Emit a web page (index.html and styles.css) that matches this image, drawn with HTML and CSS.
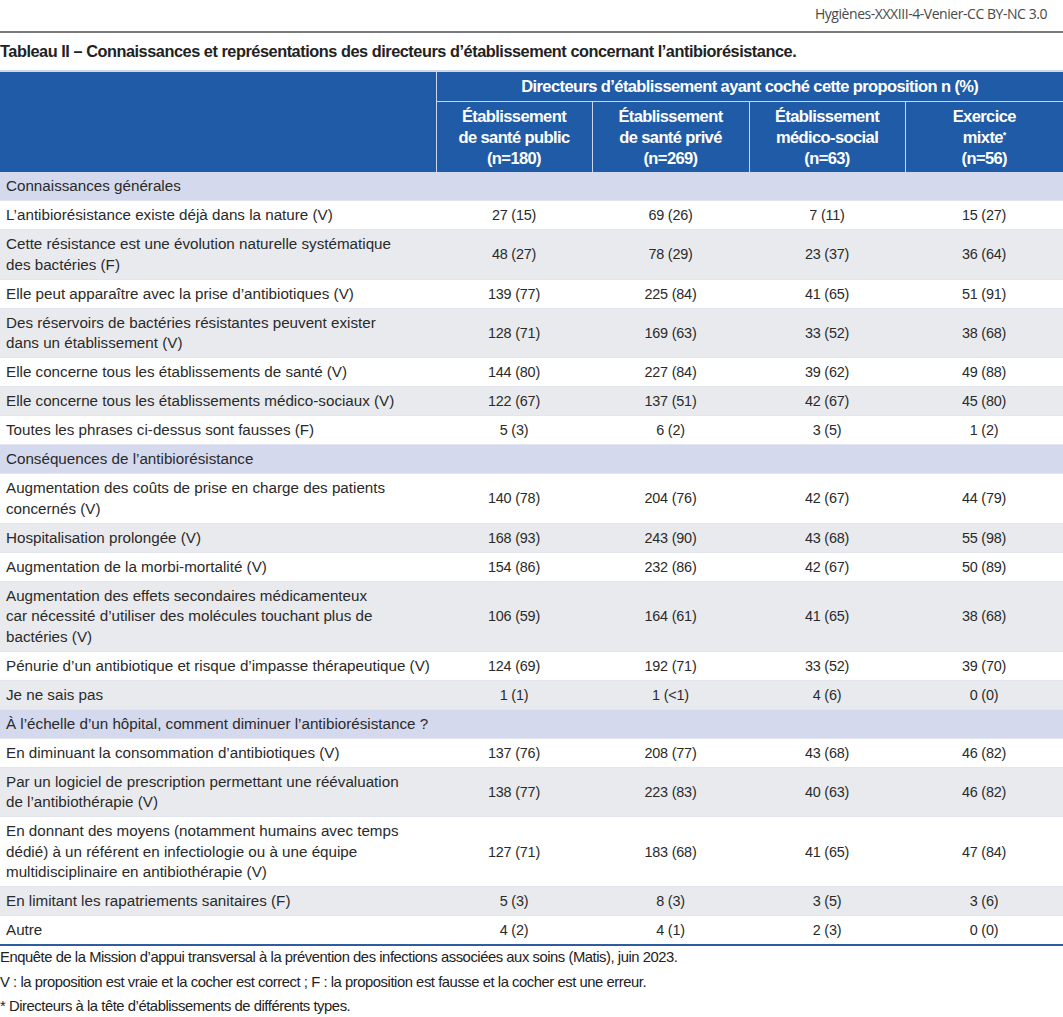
FILE: index.html
```html
<!DOCTYPE html>
<html lang="fr">
<head>
<meta charset="utf-8">
<link rel="stylesheet" href="styles.css">
</head>
<body>
<div class="page">
  <div class="source">Hygiènes-XXXIII-4-Venier-CC BY-NC 3.0</div>
  <h1 class="title">Tableau II – Connaissances et représentations des directeurs d’établissement concernant l’antibiorésistance.</h1>
  <table class="tbl">
    <colgroup>
      <col class="c0"><col class="c1"><col class="c2"><col class="c3"><col class="c4">
    </colgroup>
    <thead>
      <tr class="h1">
        <th rowspan="2" class="blank"></th>
        <th colspan="4">Directeurs d’établissement ayant coché cette proposition n (%)</th>
      </tr>
      <tr class="h2">
        <th>Établissement<br>de santé public<br>(n=180)</th>
        <th>Établissement<br>de santé privé<br>(n=269)</th>
        <th>Établissement<br>médico-social<br>(n=63)</th>
        <th>Exercice<br>mixte<sup>*</sup><br>(n=56)</th>
      </tr>
    </thead>
    <tbody>
      <tr class="sec"><td colspan="5">Connaissances générales</td></tr>
      <tr class="w"><td>L’antibiorésistance existe déjà dans la nature (V)</td><td>27 (15)</td><td>69 (26)</td><td>7 (11)</td><td>15 (27)</td></tr>
      <tr class="g"><td>Cette résistance est une évolution naturelle systématique<br>des bactéries (F)</td><td>48 (27)</td><td>78 (29)</td><td>23 (37)</td><td>36 (64)</td></tr>
      <tr class="w"><td>Elle peut apparaître avec la prise d’antibiotiques (V)</td><td>139 (77)</td><td>225 (84)</td><td>41 (65)</td><td>51 (91)</td></tr>
      <tr class="g"><td>Des réservoirs de bactéries résistantes peuvent exister<br>dans un établissement (V)</td><td>128 (71)</td><td>169 (63)</td><td>33 (52)</td><td>38 (68)</td></tr>
      <tr class="w"><td>Elle concerne tous les établissements de santé (V)</td><td>144 (80)</td><td>227 (84)</td><td>39 (62)</td><td>49 (88)</td></tr>
      <tr class="g"><td>Elle concerne tous les établissements médico-sociaux (V)</td><td>122 (67)</td><td>137 (51)</td><td>42 (67)</td><td>45 (80)</td></tr>
      <tr class="w"><td>Toutes les phrases ci-dessus sont fausses (F)</td><td>5 (3)</td><td>6 (2)</td><td>3 (5)</td><td>1 (2)</td></tr>
      <tr class="sec"><td colspan="5">Conséquences de l’antibiorésistance</td></tr>
      <tr class="w"><td>Augmentation des coûts de prise en charge des patients<br>concernés (V)</td><td>140 (78)</td><td>204 (76)</td><td>42 (67)</td><td>44 (79)</td></tr>
      <tr class="g"><td>Hospitalisation prolongée (V)</td><td>168 (93)</td><td>243 (90)</td><td>43 (68)</td><td>55 (98)</td></tr>
      <tr class="w"><td>Augmentation de la morbi-mortalité (V)</td><td>154 (86)</td><td>232 (86)</td><td>42 (67)</td><td>50 (89)</td></tr>
      <tr class="g"><td>Augmentation des effets secondaires médicamenteux<br>car nécessité d’utiliser des molécules touchant plus de<br>bactéries (V)</td><td>106 (59)</td><td>164 (61)</td><td>41 (65)</td><td>38 (68)</td></tr>
      <tr class="w"><td>Pénurie d’un antibiotique et risque d’impasse thérapeutique (V)</td><td>124 (69)</td><td>192 (71)</td><td>33 (52)</td><td>39 (70)</td></tr>
      <tr class="g"><td>Je ne sais pas</td><td>1 (1)</td><td>1 (&lt;1)</td><td>4 (6)</td><td>0 (0)</td></tr>
      <tr class="sec"><td colspan="5">À l’échelle d’un hôpital, comment diminuer l’antibiorésistance ?</td></tr>
      <tr class="w"><td>En diminuant la consommation d’antibiotiques (V)</td><td>137 (76)</td><td>208 (77)</td><td>43 (68)</td><td>46 (82)</td></tr>
      <tr class="g"><td>Par un logiciel de prescription permettant une réévaluation<br>de l’antibiothérapie (V)</td><td>138 (77)</td><td>223 (83)</td><td>40 (63)</td><td>46 (82)</td></tr>
      <tr class="w"><td>En donnant des moyens (notamment humains avec temps<br>dédié) à un référent en infectiologie ou à une équipe<br>multidisciplinaire en antibiothérapie (V)</td><td>127 (71)</td><td>183 (68)</td><td>41 (65)</td><td>47 (84)</td></tr>
      <tr class="g"><td>En limitant les rapatriements sanitaires (F)</td><td>5 (3)</td><td>8 (3)</td><td>3 (5)</td><td>3 (6)</td></tr>
      <tr class="w last"><td>Autre</td><td>4 (2)</td><td>4 (1)</td><td>2 (3)</td><td>0 (0)</td></tr>
    </tbody>
  </table>
  <div class="notes">
    <p>Enquête de la Mission d’appui transversal à la prévention des infections associées aux soins (Matis), juin 2023.</p>
    <p>V : la proposition est vraie et la cocher est correct ; F : la proposition est fausse et la cocher est une erreur.</p>
    <p>* Directeurs à la tête d’établissements de différents types.</p>
  </div>
</div>
</body>
</html>
```

FILE: styles.css
```css
* { box-sizing: border-box; }
html, body { margin: 0; padding: 0; background: #fff; }
.page {
  width: 1063px;
  font-family: "Liberation Sans", Arial, sans-serif;
  color: #2a2a2a;
}
.source {
  height: 33px;
  border-bottom: 2px solid #7a7a7a;
  text-align: right;
  padding: 4px 16px 0 0;
  font-family: "Open Sans", "Liberation Sans", sans-serif;
  font-size: 14px;
  letter-spacing: -0.45px;
  color: #4a4a4a;
}
.title {
  margin: 0;
  height: 37px;
  padding-top: 8px;
  font-size: 16.3px;
  line-height: 20px;
  font-weight: bold;
  letter-spacing: -0.45px;
  color: #222;
  white-space: nowrap;
}
.tbl {
  width: 1063px;
  border-collapse: collapse;
  table-layout: fixed;
  font-size: 14.4px;
  letter-spacing: -0.2px;
}
.c0 { width: 436px; }
.c1 { width: 156px; }
.c2 { width: 157px; }
.c3 { width: 156px; }
.c4 { width: 158px; }
.tbl thead th {
  background: #1f5ba6;
  color: #fff;
  font-weight: bold;
  font-size: 16.5px;
  letter-spacing: -0.6px;
  text-align: center;
  border-left: 1px solid #c9d6ec;
  border-bottom: 1px solid #c9d6ec;
}
.tbl thead th.blank { border-left: none; border-bottom: none; }
.tbl thead tr.h1 th { height: 30px; line-height: 21px; padding: 4px 0 4px; border-top: 2px solid #d0d6e8; }
.tbl thead tr.h2 th { line-height: 21px; padding: 4px 0 3px; border-bottom: none; }
.tbl sup { font-size: 9px; line-height: 0; vertical-align: 5px; }
.tbl td {
  line-height: 20.5px;
  padding: 4px 0 3.5px;
  border-bottom: 1px solid #e3e6f1;
  text-align: center;
  vertical-align: middle;
  color: #2a2a2a;
}
.tbl td:first-child {
  text-align: left;
  padding-left: 6px;
  font-size: 15.2px;
  letter-spacing: 0;
  white-space: nowrap;
}
.tbl tr.sec td { background: #d4d9ee; }
.tbl tr.w td { background: #ffffff; }
.tbl tr.g td { background: #e9eaee; }
.tbl tr.last td { border-bottom: 2px solid #2d5da0; }
.notes {
  margin-top: -1px;
  font-size: 14.8px;
  letter-spacing: -0.45px;
  color: #222;
}
.notes p { margin: 0; line-height: 24.5px; }
```
